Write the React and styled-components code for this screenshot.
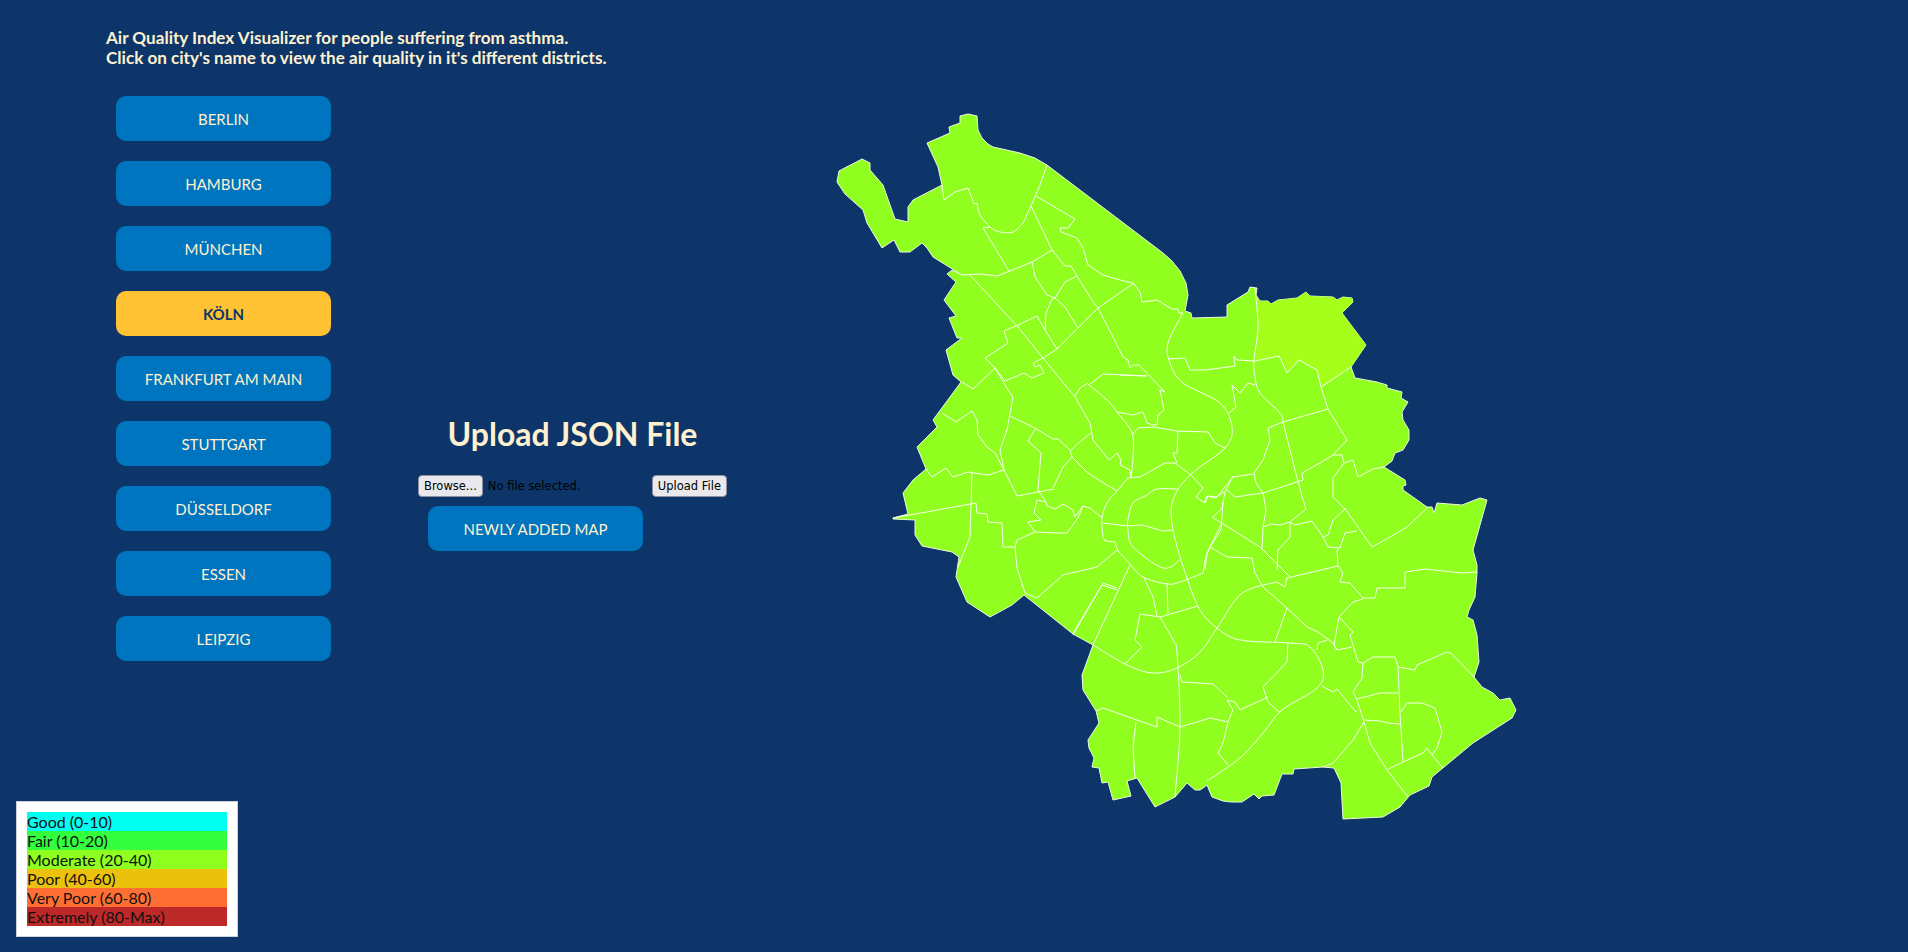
import React from 'react';
import styled, { createGlobalStyle } from 'styled-components';

const GlobalStyle = createGlobalStyle`
  html, body {
    margin: 0;
    padding: 0;
    height: 100%;
    background: #0d3569;
    overflow: hidden;
  }
`;

const Page = styled.div`
  display: flex;
  height: 952px;
  font-family: Lato, "Open Sans", sans-serif;
`;

const Sidebar = styled.aside`
  display: flex;
  flex-direction: column;
  width: 418px;
  flex: none;
  box-sizing: border-box;
  padding: 28px 0 15px 16px;
`;

const Intro = styled.p`
  margin: 0 0 0 90px;
  font-size: 17.1px;
  line-height: 20px;
  font-weight: 700;
  color: #fff1d0;
  white-space: nowrap;
`;

const CityList = styled.div`
  display: flex;
  flex-direction: column;
  gap: 20px;
  margin: 28px 0 0 100px;
`;

const CityButton = styled.button`
  width: 215px;
  height: 45px;
  border: none;
  border-radius: 10px;
  background: ${({ $active }) => ($active ? '#ffc233' : '#0075bf')};
  color: ${({ $active }) => ($active ? '#0d3569' : '#fff1d0')};
  font-family: inherit;
  font-size: 15px;
  font-weight: ${({ $active }) => ($active ? 700 : 400)};
  cursor: pointer;
`;

const Legend = styled.div`
  margin-top: auto;
  width: 222px;
  box-sizing: border-box;
  padding: 10px;
  background: #fff;
  border: 1px solid #ccd2da;
`;

const LegendRow = styled.div`
  height: 19px;
  line-height: 19px;
  font-size: 16px;
  color: #111;
  background: ${({ $color }) => $color};
`;

const UploadPanel = styled.section`
  width: 309px;
  flex: none;
  padding-top: 413px;
`;

const UploadTitle = styled.h2`
  margin: 0;
  text-align: center;
  font-size: 32px;
  line-height: 42px;
  font-weight: 700;
  color: #fff1d0;
`;

const FileRow = styled.div`
  display: flex;
  align-items: center;
  margin-top: 20px;
  font-family: "DejaVu Sans", sans-serif;
  font-size: 11.5px;
`;

const NativeButton = styled.button`
  height: 22px;
  padding: 0 5px;
  box-sizing: border-box;
  border: 1px solid #8f8f9d;
  border-radius: 4px;
  background: #e9e9ed;
  color: #000;
  font: inherit;
`;

const FileStatus = styled.span`
  flex: 1;
  margin-left: 5px;
  color: #000;
`;

const NewMap = styled.div`
  margin: 9px 0 0 10px;
`;

const MapArea = styled.div`
  flex: none;
  margin: 105px 0 0 103px;
`;

const MapSvg = styled.svg`
  display: block;
`;

const outline = [
  [960,116],[968,114],[977,116],[978,130],[982,138],[988,144],[993,147],[1020,153],[1035,158],[1047,165],[1163,253],[1172,261],[1180,271],[1186,283],[1188,295],[1185,311],[1191,313],[1192,318],[1227,317],[1227,305],[1248,292],[1250,287],[1257,288],[1256,295],[1260,301],[1268,301],[1271,304],[1278,300],[1297,298],[1306,292],[1310,296],[1333,297],[1337,300],[1343,297],[1352,298],[1353,302],[1342,313],[1366,345],[1351,367],[1355,378],[1377,382],[1387,385],[1387,388],[1402,392],[1401,398],[1408,402],[1402,412],[1403,420],[1409,430],[1409,440],[1403,450],[1395,453],[1392,461],[1384,467],[1405,480],[1406,485],[1403,486],[1403,490],[1427,507],[1432,507],[1434,513],[1437,503],[1462,505],[1480,498],[1487,500],[1473,550],[1477,565],[1477,573],[1475,597],[1469,610],[1467,617],[1473,620],[1477,635],[1479,662],[1474,677],[1482,687],[1493,693],[1500,700],[1510,698],[1516,710],[1512,718],[1473,743],[1432,777],[1429,786],[1410,795],[1400,807],[1383,817],[1343,819],[1341,783],[1334,768],[1323,767],[1294,769],[1293,774],[1282,774],[1274,795],[1262,796],[1259,799],[1254,794],[1242,802],[1231,802],[1223,801],[1212,797],[1207,785],[1203,788],[1200,790],[1195,790],[1187,783],[1175,797],[1155,807],[1137,778],[1127,781],[1131,796],[1113,800],[1108,782],[1102,783],[1099,768],[1092,767],[1094,758],[1089,748],[1088,740],[1099,723],[1096,711],[1083,690],[1082,675],[1093,645],[1073,634],[1024,595],[1012,605],[990,617],[967,602],[956,577],[959,557],[952,552],[922,546],[915,535],[915,520],[893,519],[893,518],[908,514],[903,493],[913,480],[926,469],[917,447],[937,427],[933,420],[961,382],[953,375],[946,350],[962,338],[957,338],[949,318],[956,316],[944,300],[956,282],[947,274],[952,270],[962,275],[933,257],[927,248],[922,243],[910,252],[900,252],[894,240],[882,248],[867,223],[863,210],[845,194],[837,182],[839,171],[862,159],[870,163],[870,170],[883,185],[895,219],[908,222],[908,207],[913,200],[942,185],[938,167],[927,143],[950,133],[949,127],[960,123],
];

const tintNorthEast = [
  [1256,295],[1260,301],[1268,301],[1271,304],[1278,300],[1297,298],[1306,292],[1310,296],[1333,297],[1337,300],[1343,297],[1352,298],[1353,302],[1342,313],[1366,345],[1351,367],[1321,387],[1317,370],[1299,360],[1287,373],[1279,356],[1255,361],[1258,327],
];

const tintSouth = [
  [1357,699],[1380,693],[1398,693],[1400,713],[1400,724],[1388,723],[1380,721],[1364,720],
];

// river and ring roads, drawn as smooth curves
const curves = [
  [[1183,313],[1168,343],[1170,363],[1183,383],[1220,403],[1232,427],[1225,448],[1190,475],[1173,500],[1173,530],[1187,578],[1200,610],[1217,628],[1240,640],[1290,643],[1310,647],[1323,670],[1317,688],[1282,710],[1263,733],[1240,758],[1207,781]],
  [[1093,645],[1127,665],[1153,673],[1177,668],[1200,652],[1217,628],[1237,598],[1253,588],[1277,582]],
  [[1117,491],[1107,503],[1102,518],[1103,537]],
  [[1118,551],[1130,564],[1143,577],[1167,584],[1180,582],[1203,573]],
  [[1178,489],[1157,489],[1147,495],[1133,503],[1128,520],[1128,530],[1133,547],[1163,568],[1180,560]],
  [[1088,384],[1107,400],[1117,412],[1132,433],[1133,457],[1131,477]],
  [[1031,206],[1052,250]],
  [[1023,223],[1013,232],[1000,232],[990,227],[980,215],[977,203]],
  [[1255,288],[1258,327],[1254,360],[1255,377],[1260,393],[1280,413],[1283,422]],
  [[1160,617],[1173,640],[1177,653],[1180,727],[1175,797]],
];

const districts = [
  [[1047,165],[1040,185],[1031,206],[1023,223]],
  [[977,203],[974,204],[968,188],[955,192],[944,200],[942,185]],
  [[1036,196],[1075,219],[1068,228],[1060,228],[1061,232],[1077,238],[1083,248],[1088,265],[1103,275],[1120,280],[1133,283],[1140,292],[1142,302],[1157,300],[1172,309],[1178,309],[1179,313],[1183,313]],
  [[1052,250],[1065,266],[1071,266],[1077,276],[1093,302],[1098,308],[1113,337],[1123,357],[1128,360],[1130,368],[1133,365],[1139,365],[1165,392],[1160,390],[1164,410],[1158,415],[1157,425],[1153,425],[1147,423],[1143,412],[1133,415],[1117,412]],
  [[1088,383],[1080,388],[1075,396]],
  [[983,228],[990,227]],
  [[983,228],[1009,271]],
  [[962,275],[980,274],[997,276],[1010,271],[1032,262],[1052,250]],
  [[1032,262],[1035,277],[1047,295],[1055,298],[1065,307],[1078,328]],
  [[1077,276],[1065,282],[1055,298],[1052,299],[1046,313],[1045,330],[1057,349]],
  [[970,275],[1018,327],[1043,358],[1075,397],[1090,423],[1093,440],[1109,460],[1117,453],[1121,460],[1120,465],[1130,470],[1131,477]],
  [[1134,283],[1098,308],[1078,328],[1057,349],[1043,358],[1033,363],[1035,367],[1040,365],[1044,373],[1032,378],[1024,373],[1005,381],[995,368],[985,358],[1008,343],[1004,331],[1018,325],[1037,316],[1045,330]],
  [[995,368],[973,389],[962,382]],
  [[995,368],[1008,390],[1013,397],[1007,430],[1000,450],[1004,470],[1017,496],[1054,489]],
  [[1010,416],[1035,428],[1053,439],[1058,439],[1070,450],[1072,457],[1063,467],[1053,488]],
  [[1036,428],[1028,441],[1041,453],[1038,490],[1046,502],[1047,506],[1055,509],[1063,504],[1073,510],[1075,517],[1083,506],[1090,508],[1102,518]],
  [[1072,457],[1082,467],[1088,473],[1107,485],[1117,491]],
  [[1071,450],[1082,440],[1092,432]],
  [[1117,491],[1128,478],[1140,477],[1165,463],[1175,463],[1191,475],[1203,488],[1196,497],[1205,503],[1208,496],[1217,497],[1233,477],[1253,474]],
  [[1103,537],[1105,541],[1115,542],[1118,551]],
  [[1203,573],[1205,560],[1210,547],[1221,530],[1223,502]],
  [[1103,523],[1128,526],[1142,525],[1163,531],[1173,530]],
  [[1277,582],[1285,587],[1287,578],[1338,566]],
  [[1210,547],[1227,557],[1252,558],[1255,573],[1263,587],[1287,608],[1307,627],[1318,632],[1333,643],[1337,650],[1352,647]],
  [[1212,517],[1260,547],[1290,577]],
  [[1287,608],[1275,642]],
  [[1288,643],[1287,662],[1263,687],[1268,702],[1280,713]],
  [[1268,697],[1240,710],[1235,702],[1227,700],[1233,710],[1228,722],[1223,743],[1218,753],[1228,765]],
  [[1180,675],[1182,682],[1213,684],[1227,697]],
  [[1228,722],[1210,718],[1180,727],[1157,717],[1157,727],[1103,708],[1096,711]],
  [[1136,722],[1133,747],[1135,778]],
  [[1125,664],[1142,647],[1135,640],[1140,614],[1160,617],[1198,606]],
  [[1144,578],[1153,597],[1157,616]],
  [[1167,583],[1168,613]],
  [[1130,565],[1093,645]],
  [[1117,588],[1103,583],[1073,635]],
  [[1025,593],[1037,598],[1063,575],[1097,567],[1117,550]],
  [[1015,547],[1017,568],[1025,593]],
  [[1003,547],[1015,547],[1017,540],[1035,532],[1057,533],[1067,533],[1078,518],[1083,506]],
  [[976,503],[977,513],[987,514],[988,522],[1002,523],[1003,547]],
  [[893,518],[976,503]],
  [[972,473],[970,537],[958,567]],
  [[926,469],[932,477],[946,468],[953,477],[968,472],[988,475],[1004,470]],
  [[942,413],[956,422],[972,411],[977,420],[978,435],[987,447],[995,453],[1004,470]],
  [[1035,532],[1028,522],[1041,520],[1034,513],[1037,500],[1046,502]],
  [[1073,633],[1102,585],[1117,590]],
  [[1283,422],[1295,470],[1303,500],[1306,509],[1290,522],[1280,525],[1271,524],[1263,527]],
  [[1168,359],[1185,358],[1190,370],[1205,370],[1235,366],[1234,356],[1237,360],[1255,361],[1279,356],[1287,373],[1299,360],[1317,370],[1321,387],[1351,367]],
  [[1321,387],[1328,409],[1347,440],[1333,455],[1320,463],[1302,473],[1303,480],[1263,493],[1235,497],[1227,490],[1215,498],[1207,496],[1204,503]],
  [[1328,409],[1283,422],[1268,428],[1270,440],[1263,460],[1254,473],[1256,483],[1263,493],[1266,510],[1263,527],[1262,550]],
  [[1226,490],[1233,476]],
  [[1225,492],[1222,508],[1213,517]],
  [[1222,523],[1207,553],[1205,570]],
  [[1232,385],[1236,407],[1229,413]],
  [[1232,385],[1240,393],[1248,383],[1255,385]],
  [[1333,455],[1342,455],[1344,463],[1353,460],[1358,477],[1373,469],[1384,467]],
  [[1344,463],[1333,478],[1333,497],[1346,510],[1372,547],[1390,537],[1407,527],[1428,507]],
  [[1346,508],[1333,520],[1328,535],[1323,537],[1312,521],[1295,525],[1290,522]],
  [[1323,537],[1328,547],[1340,548],[1345,533],[1357,531]],
  [[1290,522],[1290,537],[1278,550],[1277,570]],
  [[1340,548],[1337,550],[1338,566]],
  [[1338,566],[1343,573],[1340,582],[1350,583],[1363,598],[1375,598],[1377,588],[1405,588],[1405,572],[1425,569],[1462,573],[1477,572]],
  [[1363,599],[1353,602],[1339,617],[1334,645],[1337,650]],
  [[1339,617],[1353,632],[1350,635],[1358,662],[1363,663],[1362,678],[1353,692],[1357,700],[1364,722],[1370,743],[1387,770],[1408,797]],
  [[1364,722],[1353,740],[1333,763],[1323,767]],
  [[1364,720],[1380,721],[1388,723],[1400,724]],
  [[1357,699],[1380,693],[1398,693]],
  [[1363,663],[1373,657],[1395,657],[1398,667],[1400,713],[1403,762],[1388,769]],
  [[1398,667],[1415,670],[1417,665],[1447,652],[1452,654],[1474,677]],
  [[1401,712],[1407,703],[1422,703],[1435,708],[1442,732],[1437,748],[1432,755],[1443,768]],
  [[1403,762],[1423,753],[1427,748],[1432,755]],
  [[1322,686],[1333,692],[1337,689],[1355,711],[1357,712]],
  [[1317,650],[1318,643],[1327,640]],
  [[1090,384],[1103,374],[1147,376]],
  [[1132,435],[1138,428],[1153,427],[1177,431],[1208,432],[1215,443],[1225,448]],
  [[1178,431],[1177,453],[1173,453],[1177,463]],
  [[1120,375],[1146,376]],
];

const toPoints = (pts) => pts.map((p) => p.join(',')).join(' ');

// catmull-rom through the points, as cubic beziers
const toCurve = (pts) => {
  let d = `M${pts[0][0]} ${pts[0][1]}`;
  for (let i = 0; i < pts.length - 1; i++) {
    const p0 = pts[i - 1] || pts[i];
    const p1 = pts[i];
    const p2 = pts[i + 1];
    const p3 = pts[i + 2] || p2;
    const c1x = p1[0] + (p2[0] - p0[0]) / 6;
    const c1y = p1[1] + (p2[1] - p0[1]) / 6;
    const c2x = p2[0] - (p3[0] - p1[0]) / 6;
    const c2y = p2[1] - (p3[1] - p1[1]) / 6;
    d += `C${c1x} ${c1y} ${c2x} ${c2y} ${p2[0]} ${p2[1]}`;
  }
  return d;
};

const cities = ['BERLIN', 'HAMBURG', 'MÜNCHEN', 'KÖLN', 'FRANKFURT AM MAIN', 'STUTTGART', 'DÜSSELDORF', 'ESSEN', 'LEIPZIG'];

const legend = [
  ['Good (0-10)', '#00fff0'],
  ['Fair (10-20)', '#33ff3e'],
  ['Moderate (20-40)', '#8eff1e'],
  ['Poor (40-60)', '#ecc10e'],
  ['Very Poor (60-80)', '#ff6f33'],
  ['Extremely (80-Max)', '#bd2828'],
];

const lineProps = { fill: 'none', stroke: '#fff', strokeOpacity: 0.92, strokeWidth: 1, strokeLinejoin: 'round' };

const CityMap = () => (
  <MapSvg width="700" height="730" viewBox="830 105 700 730">
    <polygon points={toPoints(outline)} fill="#90ff1f" stroke="#eef8e0" strokeWidth="1" strokeLinejoin="round" />
    <polygon points={toPoints(tintNorthEast)} fill="#a6ff1a" />
    <polygon points={toPoints(tintSouth)} fill="#98ff18" />
    {districts.map((line, i) => (
      <polyline key={i} points={toPoints(line)} {...lineProps} />
    ))}
    {curves.map((line, i) => (
      <path key={i} d={toCurve(line)} {...lineProps} />
    ))}
  </MapSvg>
);

const App = () => (
  <>
    <GlobalStyle />
    <Page>
      <Sidebar>
        <Intro>
          Air Quality Index Visualizer for people suffering from asthma.
          <br />
          Click on city's name to view the air quality in it's different districts.
        </Intro>
        <CityList>
          {cities.map((city) => (
            <CityButton key={city} $active={city === 'KÖLN'}>{city}</CityButton>
          ))}
        </CityList>
        <Legend>
          {legend.map(([label, color]) => (
            <LegendRow key={label} $color={color}>{label}</LegendRow>
          ))}
        </Legend>
      </Sidebar>
      <UploadPanel>
        <UploadTitle>Upload JSON File</UploadTitle>
        <FileRow>
          <NativeButton>Browse...</NativeButton>
          <FileStatus>No file selected.</FileStatus>
          <NativeButton>Upload File</NativeButton>
        </FileRow>
        <NewMap>
          <CityButton>NEWLY ADDED MAP</CityButton>
        </NewMap>
      </UploadPanel>
      <MapArea>
        <CityMap />
      </MapArea>
    </Page>
  </>
);

export default App;
